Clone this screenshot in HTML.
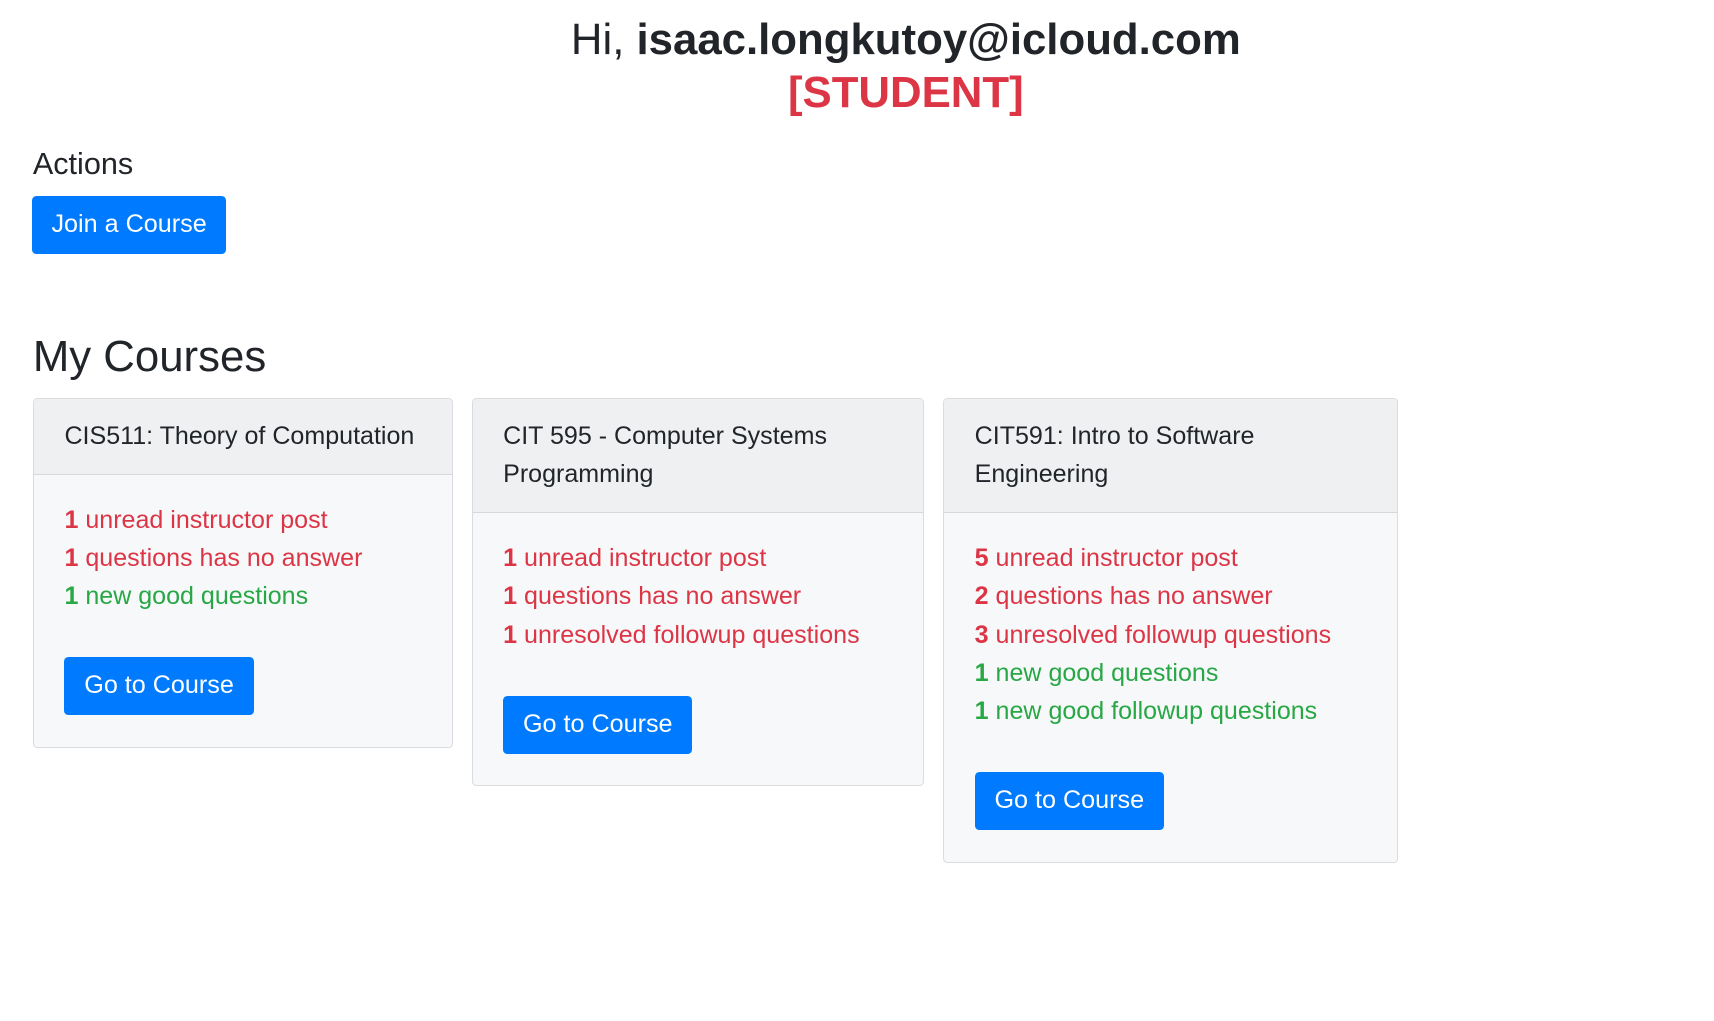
<!DOCTYPE html>
<html><head><meta charset="utf-8"><style>
html,body{margin:0;padding:0;background:#fff;}
body{zoom:1.094;width:1567px;height:933px;position:relative;font-family:"Liberation Sans",Arial,sans-serif;color:#212529;overflow:hidden;}
.hi{position:absolute;left:100px;width:1456px;top:13px;text-align:center;font-size:40px;line-height:48px;font-weight:500;}
.hi b{font-weight:700;}
.hi .st{color:#dc3545;font-weight:700;}
.act{position:absolute;left:30px;top:133px;font-size:28px;line-height:34px;}
.btn{display:inline-block;background:#007bff;color:#fff;border-radius:4px;box-sizing:border-box;height:53px;line-height:53px;font-size:23px;text-align:center;}
.join{position:absolute;left:29px;top:179px;width:178px;}
.myc{position:absolute;left:30px;top:303px;font-size:40px;line-height:48px;}
.card{position:absolute;top:364px;border:1px solid #dadcdf;border-radius:4px;background:#f7f8fa;box-sizing:border-box;overflow:hidden;}
.hd{background:#eff0f2;border-bottom:1px solid #d6d8db;padding:16px 28px 17px 28px;font-size:22.9px;line-height:35px;}
.bd{padding:24px 28px 29px 28px;font-size:22.9px;line-height:35px;}
.r{color:#dc3545}.g{color:#28a745}
.bd b{font-weight:700}
.bd .btn{width:173px;margin-top:38px;display:block;}
</style></head><body>
<div class="hi">Hi, <b>isaac.longkutoy@icloud.com</b><br><span class="st">[STUDENT]</span></div>
<div class="act">Actions</div>
<div class="btn join">Join a Course</div>
<div class="myc">My Courses</div>

<div class="card" style="left:30px;width:384px;">
<div class="hd">CIS511: Theory of Computation</div>
<div class="bd">
<div class="r"><b>1</b> unread instructor post</div>
<div class="r"><b>1</b> questions has no answer</div>
<div class="g"><b>1</b> new good questions</div>
<div class="btn">Go to Course</div>
</div></div>

<div class="card" style="left:431px;width:414px;">
<div class="hd">CIT 595 - Computer Systems<br>Programming</div>
<div class="bd">
<div class="r"><b>1</b> unread instructor post</div>
<div class="r"><b>1</b> questions has no answer</div>
<div class="r"><b>1</b> unresolved followup questions</div>
<div class="btn">Go to Course</div>
</div></div>

<div class="card" style="left:862px;width:416px;">
<div class="hd">CIT591: Intro to Software<br>Engineering</div>
<div class="bd">
<div class="r"><b>5</b> unread instructor post</div>
<div class="r"><b>2</b> questions has no answer</div>
<div class="r"><b>3</b> unresolved followup questions</div>
<div class="g"><b>1</b> new good questions</div>
<div class="g"><b>1</b> new good followup questions</div>
<div class="btn">Go to Course</div>
</div></div>
</body></html>
